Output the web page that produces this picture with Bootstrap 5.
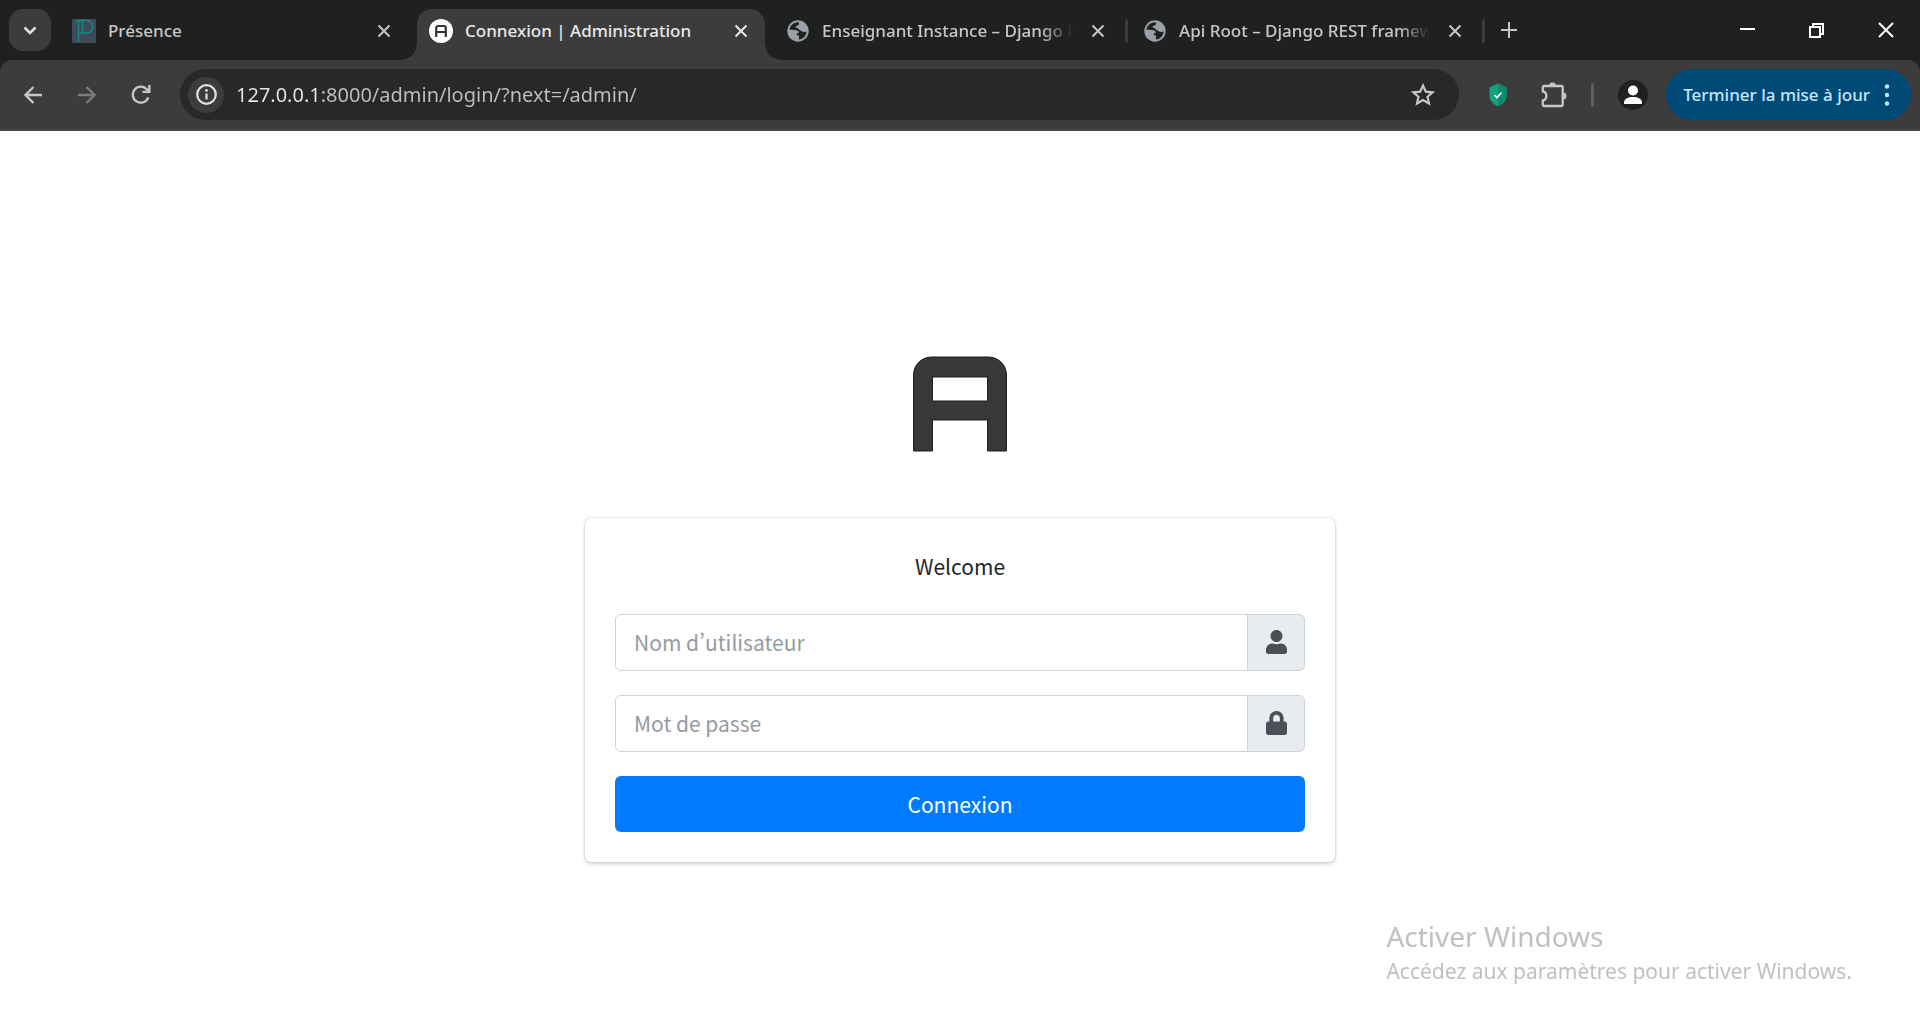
<!DOCTYPE html>
<html lang="fr">
<head>
<meta charset="utf-8">
<meta name="viewport" content="width=device-width, initial-scale=1">
<title>Connexion | Administration</title>
<link href="https://cdn.jsdelivr.net/npm/bootstrap@5.3.0/dist/css/bootstrap.min.css" rel="stylesheet">
<style>
:root{--strip:#1f2121;--bar:#3c3c3c;--field:#282828;--ink:#c7c7c7;--ui:"Noto Sans","Open Sans",sans-serif;--page:"Noto Sans CJK SC","Noto Sans",sans-serif}
body{font-family:var(--page);background:#fff;color:#212529}
svg{display:block;flex:none}
button{border:0;background:none;padding:0;color:inherit}
.tabstrip{background:var(--strip);height:60px;padding:0 0 0 9px;gap:9px;font-family:var(--ui);color:var(--ink)}
.tab-search{flex:none;width:42px;height:42px;border-radius:14px;background:var(--bar);color:#e3e3e3}
.tab-list{flex:0 1 1419px;min-width:0;gap:9px}
.tab-item{flex:1 1 0;min-width:0;height:51px;padding:0 12px;position:relative}
.tab-item.current{background:var(--bar);border-radius:15px 15px 0 0;color:#e8e8e8}
.tab-item.current::before,.tab-item.current::after{content:"";position:absolute;bottom:0;width:15px;height:15px}
.tab-item.current::before{right:100%;background:radial-gradient(circle at 0 0,transparent 14px,var(--bar) 15px)}
.tab-item.current::after{left:100%;background:radial-gradient(circle at 100% 0,transparent 14px,var(--bar) 15px)}
.tab-item.ruled::after{content:"";position:absolute;right:-6px;top:10px;width:3px;height:24px;border-radius:2px;background:#3c3c3c}
.tab-link{color:inherit;text-decoration:none;gap:12px;height:43px}
.tab-title{font-size:17px;line-height:26px;font-weight:500;white-space:nowrap;overflow:hidden}
.tab-title.faded{-webkit-mask-image:linear-gradient(90deg,#000 calc(100% - 32px),transparent);mask-image:linear-gradient(90deg,#000 calc(100% - 32px),transparent)}
.tab-close{flex:none;width:24px;height:43px;margin-left:13px}
.win-btn{width:69px;height:60px;color:#fff}
.toolbar{background:var(--strip);font-family:var(--ui)}
.toolbar-inner{background:var(--bar);border-radius:12px 12px 0 0;height:71px;padding:9px 9px 9px 6px;border-bottom:2px solid #474747;color:var(--ink)}
.nav-btn{width:54px;height:51px}
.omnibox{background:var(--field);border-radius:26px;height:51px;margin-left:12px;padding:0 18px 0 8px}
.site-info{width:36px;height:36px;border-radius:50%;background:var(--bar);color:#e3e3e3}
.url-field{font-size:20px;line-height:30px;border:0;outline:0;padding:0;margin-left:12px;min-width:0;background:linear-gradient(90deg,#e8e8e8 84px,#c0c0c0 84px);-webkit-background-clip:text;background-clip:text;color:transparent}
.tool-group{gap:24px;margin:0 18px 0 28px}
.ext-group{gap:32px}
.tool-rule{width:3px;height:24px;border-radius:2px;background:#5e5e5e}
.avatar{width:30px;height:30px;border-radius:50%;background:var(--strip)}
.update-btn{height:51px;border-radius:26px;background:#004a77;color:#c2e7ff;padding:0 17px;gap:10px;font-size:17px;line-height:26px;font-weight:500;white-space:nowrap}
.viewport-area{min-height:calc(100vh - 131px);padding:24px}
.login-shell{width:750px;max-width:100%}
.brand-mark{margin:0 auto 14px}
.login-card{border:0;border-radius:6px;box-shadow:0 0 2px rgba(0,0,0,.2),0 2px 4px rgba(0,0,0,.18);padding:30px}
.welcome-text{font-size:21px;line-height:36px;margin-bottom:30px}
.field-row{height:57px;margin-bottom:24px}
.field-row .form-control,.field-row .input-group-text{border-color:#ced4da;border-radius:6px;font-size:21px;line-height:36px}
.field-row .form-control{padding:0 18px;font-variant-east-asian:proportional-width}
.field-row .form-control::placeholder{color:#939ba2}
.field-row .input-group-text{width:58px;padding:0;background:#e9ecef;color:#495057}
.login-btn{height:56px;border-radius:6px;background:#007bff;border:0;font-size:21px;line-height:36px;padding:0}
.login-btn:hover{background:#0069d9}
.os-notice{position:fixed;right:68px;bottom:48px;color:#c0c0c0;font-family:var(--ui);pointer-events:none}
.notice-head{font-size:28px;line-height:40px}
.notice-line{font-size:21px;line-height:30px}
</style>
</head>
<body>
<svg width="0" height="0" class="position-absolute" aria-hidden="true">
 <symbol id="x" viewBox="0 0 14 14"><path d="M1.500 1.500l11 11M12.500 1.500l-11 11" stroke="currentColor" stroke-width="2" fill="none"/></symbol>
 <symbol id="globe" viewBox="0 0 24 24"><circle cx="12" cy="12" r="10.700" fill="#9aa0a6"/><path d="M3.400 10.600C4.200 6.500 7.500 3.500 12 3.300c1.500.6 1.300 2 .4 2.800-1.100.9-2.700.6-2.900 1.900 0 1.100 2.700.8 2.900 2 .6 1.300 2.400 1.100 3.300 1.900s2.500 1.500 4.900.7c-.3 4.200-3.400 7.600-7.600 8-.8-1.300.6-2.400.2-3.500-.5-1-2.500-.5-2.600-1.900 0-1.200 1.600-.7 2.200-1.500.4-.9-.8-2.100-2.400-2.400-2.500-.3-4.500 0-7-.7z" fill="#1f2121"/></symbol>
</svg>
<header>
 <div class="tabstrip d-flex align-items-end">
  <button class="tab-search d-flex align-items-center justify-content-center align-self-center" aria-label="Rechercher des onglets"><svg width="14" height="9" viewBox="0 0 14 9"><path d="M1.500 1.500L7 7l5.500-5.500" fill="none" stroke="currentColor" stroke-width="2.500"/></svg></button>
  <nav class="tab-list d-flex" aria-label="Onglets">
   <div class="tab-item d-flex">
    <a href="#" class="tab-link d-flex align-items-center flex-grow-1 overflow-hidden"><svg width="24" height="24" viewBox="0 0 24 24"><path fill="#414a57" d="M0 0h24v24H0z"/><path d="M3.500 1.500h11a6 6 0 0 1 0 12.500H6M6.500 1.500v21M10.500 1.500V14" fill="none" stroke="#168787" stroke-width="1.400"/></svg><span class="tab-title flex-grow-1">Présence</span></a>
    <button class="tab-close d-flex align-items-center justify-content-center" aria-label="Fermer"><svg width="14" height="14"><use href="#x"/></svg></button>
   </div>
   <div class="tab-item current d-flex">
    <a href="#" class="tab-link d-flex align-items-center flex-grow-1 overflow-hidden"><svg width="24" height="24" viewBox="0 0 24 24"><circle cx="12" cy="12" r="12" fill="#fff"/><path d="M7.200 18V9a2 2 0 0 1 2-2h5.600a2 2 0 0 1 2 2v9M7.200 13h9.600" fill="none" stroke="#343434" stroke-width="2.200"/></svg><span class="tab-title flex-grow-1">Connexion | Administration</span></a>
    <button class="tab-close d-flex align-items-center justify-content-center" aria-label="Fermer"><svg width="14" height="14"><use href="#x"/></svg></button>
   </div>
   <div class="tab-item ruled d-flex">
    <a href="#" class="tab-link d-flex align-items-center flex-grow-1 overflow-hidden"><svg width="24" height="24"><use href="#globe"/></svg><span class="tab-title faded flex-grow-1">Enseignant Instance – Django REST framework</span></a>
    <button class="tab-close d-flex align-items-center justify-content-center" aria-label="Fermer"><svg width="14" height="14"><use href="#x"/></svg></button>
   </div>
   <div class="tab-item ruled d-flex">
    <a href="#" class="tab-link d-flex align-items-center flex-grow-1 overflow-hidden"><svg width="24" height="24"><use href="#globe"/></svg><span class="tab-title faded flex-grow-1">Api Root – Django REST framework</span></a>
    <button class="tab-close d-flex align-items-center justify-content-center" aria-label="Fermer"><svg width="14" height="14"><use href="#x"/></svg></button>
   </div>
  </nav>
  <button class="tab-search bg-transparent d-flex align-items-center justify-content-center align-self-center" aria-label="Nouvel onglet"><svg width="16" height="16" viewBox="0 0 16 16"><path d="M8 0v16M0 8h16" stroke="#c7c7c7" stroke-width="2"/></svg></button>
  <div class="d-flex ms-auto">
   <button class="win-btn d-flex align-items-center justify-content-center" aria-label="Réduire"><svg width="15" height="17" viewBox="0 0 15 17"><path d="M0 7h15" stroke="currentColor" stroke-width="2"/></svg></button>
   <button class="win-btn d-flex align-items-center justify-content-center" aria-label="Restaurer"><svg width="15" height="15" viewBox="0 0 15 15"><path d="M1 4h10v10H1zM4 4V1h10v10h-3" fill="none" stroke="currentColor" stroke-width="2"/></svg></button>
   <button class="win-btn d-flex align-items-center justify-content-center" aria-label="Fermer la fenêtre"><svg width="16" height="16" viewBox="0 0 16 16"><path d="M1 1l14 14M15 1L1 15" stroke="currentColor" stroke-width="2"/></svg></button>
  </div>
 </div>
 <div class="toolbar">
  <div class="toolbar-inner d-flex align-items-center">
   <button class="nav-btn d-flex align-items-center justify-content-center" aria-label="Retour"><svg width="18" height="18" viewBox="0 0 18 18"><path d="M18 9H2M9.500 1L1.500 9l8 8" fill="none" stroke="currentColor" stroke-width="2.300"/></svg></button>
   <button class="nav-btn d-flex align-items-center justify-content-center" aria-label="Avancer"><svg width="18" height="18" viewBox="0 0 18 18"><path d="M0 9h16M8.500 1l8 8-8 8" fill="none" stroke="#7c7c7c" stroke-width="2.300"/></svg></button>
   <button class="nav-btn d-flex align-items-center justify-content-center" aria-label="Actualiser"><svg width="20" height="20" viewBox="0 0 20 20"><path d="M17.300 12.500A8 8 0 1 1 16 4.600l2 2.200" fill="none" stroke="currentColor" stroke-width="2.300"/><path d="M19.500 0v8h-8V5.700h5.700V0z" fill="currentColor"/></svg></button>
   <div class="omnibox d-flex align-items-center flex-grow-1">
    <button class="site-info d-flex align-items-center justify-content-center" aria-label="Informations sur le site"><svg width="21" height="21" viewBox="0 0 21 21"><circle cx="10.500" cy="10.500" r="9.300" fill="none" stroke="currentColor" stroke-width="2.200"/><path d="M10.500 9.500v6" stroke="currentColor" stroke-width="2.200"/><circle cx="10.500" cy="6.400" r="1.400" fill="currentColor"/></svg></button>
    <input class="url-field flex-grow-1" type="text" aria-label="Adresse" value="127.0.0.1:8000/admin/login/?next=/admin/">
    <button class="d-flex" aria-label="Ajouter aux favoris"><svg width="36" height="24" viewBox="-6 0 36 24"><path d="M12 2.500l2.800 6.200 6.800.6-5.100 4.500 1.500 6.700-6-3.500-6 3.500 1.500-6.700-5.100-4.500 6.800-.6z" fill="none" stroke="currentColor" stroke-width="2.200"/></svg></button>
   </div>
   <div class="tool-group d-flex align-items-center">
    <div class="ext-group d-flex align-items-center">
     <button class="d-flex" aria-label="Protection"><svg width="22" height="24" viewBox="0 0 22 24"><path d="M11 .5l8.500 4V13c0 5-4 8-8.500 10.500C6.500 21 2.500 18 2.500 13V4.500z" fill="#12a383"/><path d="M11 .5l8.500 4V13c0 5-4 8-8.500 10.500z" fill="#0f8a71"/><path d="M7.500 12l2.500 2.500 4.500-5" fill="none" stroke="#fff" stroke-width="1.600"/></svg></button>
     <button class="d-flex" aria-label="Extensions"><svg width="26" height="26" viewBox="0 0 26 26"><path d="M3 4h17.500a1.200 1.200 0 0 1 1.200 1.200v17.600a1.200 1.200 0 0 1-1.200 1.200H3a1.200 1.200 0 0 1-1.200-1.200V18.500c2.600-.4 3.600-2.200 3.600-4.500S4.400 9.900 1.800 9.500V5.200A1.200 1.200 0 0 1 3 4z" fill="none" stroke="currentColor" stroke-width="2.300"/><path d="M8 4a3.500 3.500 0 0 1 7 0zM22 10.500a3.500 3.500 0 0 1 0 7z" fill="currentColor"/></svg></button>
    </div>
    <span class="tool-rule"></span>
    <button class="avatar d-flex align-items-center justify-content-center" aria-label="Profil"><svg width="20" height="20" viewBox="0 0 20 20"><circle cx="10" cy="5.500" r="5" fill="#fff"/><path d="M1 19v-1.500c0-3.500 4-5.500 9-5.500s9 2 9 5.500V19z" fill="#fff"/></svg></button>
   </div>
   <button class="update-btn d-flex align-items-center"><span>Terminer la mise à jour</span><svg width="14" height="22" viewBox="0 0 14 22"><g fill="currentColor"><circle cx="7" cy="2.500" r="2.200"/><circle cx="7" cy="11" r="2.200"/><circle cx="7" cy="19.500" r="2.200"/></g></svg></button>
  </div>
 </div>
</header>
<main class="viewport-area d-flex flex-column align-items-center justify-content-center">
 <div class="login-shell">
  <svg class="brand-mark" width="200" height="200" viewBox="0 0 200 200" role="img" aria-label="Administration"><path fill-rule="evenodd" d="M53.500 147V71a18 18 0 0 1 18-18h57a18 18 0 0 1 18 18v76h-19v-31h-55v31zM72.500 73v24h55V73z" fill="#383838" stroke="#1f1f1f"/></svg>
  <form class="card login-card" onsubmit="return false">
   <p class="welcome-text text-center">Welcome</p>
   <div class="input-group field-row"><input id="user" class="form-control" type="text" placeholder="Nom d’utilisateur" aria-label="Nom d’utilisateur"><label for="user" class="input-group-text justify-content-center"><svg width="21" height="24" viewBox="0 0 448 512"><path fill="currentColor" d="M224 256c70.700 0 128-57.300 128-128S294.700 0 224 0 96 57.300 96 128s57.300 128 128 128zm89.600 32h-16.700c-22.200 10.200-46.900 16-72.900 16s-50.600-5.800-72.900-16h-16.700C60.200 288 0 348.200 0 422.400V464c0 26.500 21.500 48 48 48h352c26.500 0 48-21.500 48-48v-41.600c0-74.200-60.200-134.400-134.400-134.400z"/></svg></label></div>
   <div class="input-group field-row"><input id="pass" class="form-control" type="password" placeholder="Mot de passe" aria-label="Mot de passe"><label for="pass" class="input-group-text justify-content-center"><svg width="21" height="24" viewBox="0 0 448 512"><path fill="currentColor" d="M400 224h-24v-72C376 68.200 307.800 0 224 0S72 68.200 72 152v72H48c-26.500 0-48 21.500-48 48v192c0 26.500 21.500 48 48 48h352c26.500 0 48-21.500 48-48V272c0-26.500-21.500-48-48-48zm-104 0H152v-72c0-39.700 32.300-72 72-72s72 32.300 72 72v72z"/></svg></label></div>
   <button class="btn btn-primary login-btn w-100" type="submit">Connexion</button>
  </form>
 </div>
</main>
<aside class="os-notice"><div class="notice-head">Activer Windows</div><div class="notice-line">Accédez aux paramètres pour activer Windows.</div></aside>
<script src="https://cdn.jsdelivr.net/npm/bootstrap@5.3.0/dist/js/bootstrap.bundle.min.js"></script>
</body>
</html>
